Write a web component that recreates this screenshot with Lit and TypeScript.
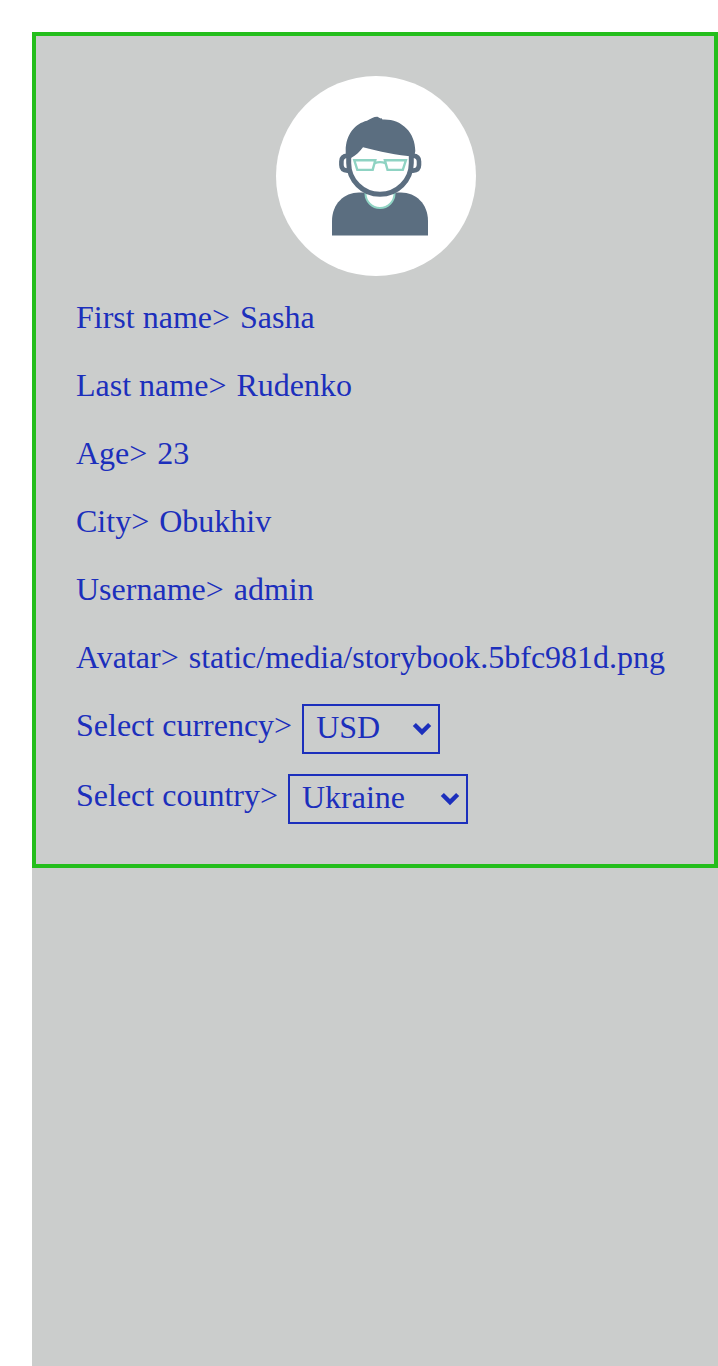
import { LitElement, html, css } from "lit";
import { customElement, property } from "lit/decorators.js";

@customElement("profile-avatar")
class ProfileAvatar extends LitElement {
  static styles = css`
    :host { display: block; width: 200px; height: 200px; border-radius: 50%; background: #fff; overflow: hidden; }
    svg { display: block; }
  `;
  render() {
    return html`<svg width="200" height="200" viewBox="276 76 200 200" fill="none">
      <path d="M332 235.5V221C332 204 344 192.5 359 192.5H401C416 192.5 428 204 428 221V235.5Z" fill="#5b6e80"/>
      <path d="M365.5 192.5V193.5A14.500 14.500 0 0 0 394.500 193.500V192.500Z" fill="#fff" stroke="#8fd3c3" stroke-width="2"/>
      <path d="M348.500 155.800H347.500Q341.400 156 341.400 161.500V165Q341.400 170.300 347.500 170.600H348.500M411.500 155.800H413Q419 156 419 161.500V165Q419 170.300 413 170.600H411.500" stroke="#5b6e80" stroke-width="4.600"/>
      <path d="M348.700 152V163A31.300 31.300 0 0 0 411.300 163V152" fill="#fff" stroke="#5b6e80" stroke-width="5"/>
      <path d="M345.700 158V151C345.700 134 355.500 123.500 367 120.800C371 118.600 374 116.500 377.500 116.700L380.500 118.500L381.200 117.900L382.500 119.500C401 118.500 415.300 132 415.300 151L414.300 156.500C397 155.500 379 151.300 363 147.300C360 151.500 356 155.500 351 158Z" fill="#5b6e80"/>
      <g stroke="#8fd3c3" stroke-width="2.400">
        <path d="M354.300 160.300H375.300L372.700 169.900H357.300Z"/>
        <path d="M384.900 160.300H405.900L402.800 169.900H387.500Z"/>
        <path d="M374.700 163Q380 161.200 385.400 163"/>
      </g>
    </svg>`;
  }
}

@customElement("profile-select")
class ProfileSelect extends LitElement {
  @property({ type: Array }) options: string[] = [];
  static styles = css`
    :host { display: block; }
    .box { box-sizing: border-box; height: 50px; border: 2px solid #1c2fbc; padding: 0 7px 4px 12px; display: flex; align-items: center; justify-content: space-between; }
    .value { line-height: 42px; }
    svg { display: block; margin-top: 3px; }
  `;
  render() {
    return html`<div class="box" role="combobox" tabindex="0">
      <span class="value">${this.options[0]}</span>
      <svg width="18" height="12" viewBox="0 0 18 12" overflow="visible"><path d="M-0.200 3L2.900 -0.100L9 6L15.100 -0.100L18.200 3L9 12.200Z" fill="#1c2fbc"/></svg>
    </div>`;
  }
}

@customElement("app-root")
class AppRoot extends LitElement {
  static styles = css`
    :host { display: block; box-sizing: border-box; min-height: 1366px; padding: 32px 0 0 32px; background: #fff; color: #1c2fbc; font: 32px "Liberation Serif", serif; }
    .page { min-height: 1334px; background: #cbcdcc; }
    .card { box-sizing: border-box; height: 836px; border: 4px solid #24be1c; padding: 40px; display: flex; flex-direction: column; gap: 20px; }
    profile-avatar { align-self: center; flex: none; margin-left: 2px; }
    .row { display: flex; gap: 10px; height: 48px; line-height: 42px; white-space: nowrap; }
    .tall { height: 50px; }
    .currency { width: 138px; }
    .country { width: 180px; }
  `;
  private fields = [
    ["First name", "Sasha"],
    ["Last name", "Rudenko"],
    ["Age", "23"],
    ["City", "Obukhiv"],
    ["Username", "admin"],
    ["Avatar", "static/media/storybook.5bfc981d.png"],
  ];
  render() {
    return html`<main class="page">
      <section class="card">
        <profile-avatar></profile-avatar>
        ${this.fields.map(([label, value]) => html`<div class="row"><span>${label}&gt;</span><span>${value}</span></div>`)}
        <div class="row tall"><span>Select currency&gt;</span><profile-select class="currency" .options=${["USD"]}></profile-select></div>
        <div class="row tall"><span>Select country&gt;</span><profile-select class="country" .options=${["Ukraine"]}></profile-select></div>
      </section>
    </main>`;
  }
}
